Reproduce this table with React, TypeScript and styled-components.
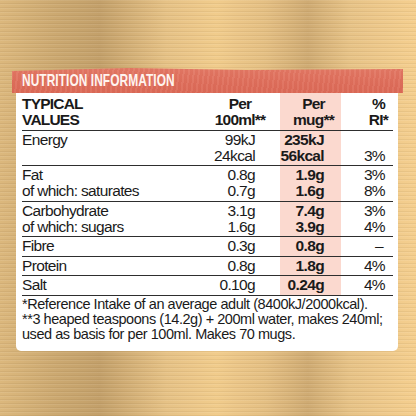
import React from 'react';
import styled, { createGlobalStyle } from 'styled-components';

const GlobalStyle = createGlobalStyle`
  html, body {
    margin: 0;
    padding: 0;
  }

  body {
    font-family: "Liberation Sans", Arial, sans-serif;
    color: #1a1a1a;
  }
`;

const Page = styled.div`
  width: 416px;
  height: 416px;
  box-sizing: border-box;
  padding: 68px 18px 0 16px;
  overflow: hidden;
  background:
    repeating-linear-gradient(180deg, rgba(255, 255, 255, 0.08) 0 1px, rgba(0, 0, 0, 0) 1px 3px, rgba(90, 60, 20, 0.07) 3px 4px),
    linear-gradient(90deg, #dcb87d 0%, #cba870 14%, #c3a06a 24%, #e6c286 40%, #f1cc8c 52%, #e4bf83 64%, #cfab73 74%, #e7c387 84%, #f5cf8f 100%);
`;

const Card = styled.div`
  display: flex;
  flex-direction: column;
`;

const Banner = styled.div`
  height: 25px;
  margin: 0 -5px 0 -4px;
  padding-left: 10px;
  display: flex;
  align-items: center;
  background:
    repeating-linear-gradient(97deg, rgba(255, 255, 255, 0.05) 0 2px, rgba(150, 40, 30, 0.05) 2px 5px),
    linear-gradient(180deg, #e47a66 0%, #df6f5c 60%, #dc6b58 100%);
  clip-path: polygon(0 3px, 30% 0, 60% 2px, 100% 1px, 100% 100%, 0 100%);
`;

const BannerText = styled.span`
  display: inline-block;
  color: #fff4ef;
  font-weight: 700;
  font-size: 17px;
  letter-spacing: 0.1px;
  white-space: nowrap;
  transform: scaleX(0.7);
  transform-origin: left center;
`;

const Panel = styled.div`
  background: #ffffff;
  border-radius: 0 0 5px 5px;
  padding: 0 5px 9px 6px;
`;

const Row = styled.div<{ $head?: boolean }>`
  display: grid;
  grid-template-columns: 190px 56px 12px 61px 52px;
  border-bottom: 1.5px solid #2e2e2e;
  font-size: 15.5px;
  line-height: 16px;
  letter-spacing: ${({ $head }) => ($head ? '-0.8px' : '-0.65px')};
  font-weight: ${({ $head }) => ($head ? 700 : 400)};
`;

type Align = 'left' | 'center' | 'right';

const Cell = styled.div<{ $align?: Align; $pad?: number; $bold?: boolean; $pink?: boolean; $head?: boolean }>`
  text-align: ${({ $align }) => $align || 'left'};
  padding: ${({ $head }) => ($head ? '3px 0 1.5px' : '1px 0 1.5px')};
  padding-right: ${({ $pad }) => $pad || 0}px;
  padding-left: ${({ $align, $pink }) => ($align === 'center' && $pink ? '6px' : '0')};
  font-weight: ${({ $bold }) => ($bold ? 700 : 'inherit')};
  background: ${({ $pink }) => ($pink ? '#fbd9cf' : 'transparent')};
  white-space: nowrap;
`;

const Stack = styled.span`
  display: inline-block;
  text-align: center;
`;

const Note = styled.p`
  margin: 0;
  padding-top: 1px;
  font-size: 14.5px;
  line-height: 15.2px;
  letter-spacing: -0.45px;
`;

interface INutrient {
  label: string[];
  per100: string[];
  mug: string[];
  ri: string[];
}

const nutrients: INutrient[] = [
  { label: ['Energy'], per100: ['99kJ', '24kcal'], mug: ['235kJ', '56kcal'], ri: ['', '3%'] },
  { label: ['Fat', 'of which: saturates'], per100: ['0.8g', '0.7g'], mug: ['1.9g', '1.6g'], ri: ['3%', '8%'] },
  { label: ['Carbohydrate', 'of which: sugars'], per100: ['3.1g', '1.6g'], mug: ['7.4g', '3.9g'], ri: ['3%', '4%'] },
  { label: ['Fibre'], per100: ['0.3g'], mug: ['0.8g'], ri: ['–'] },
  { label: ['Protein'], per100: ['0.8g'], mug: ['1.8g'], ri: ['4%'] },
  { label: ['Salt'], per100: ['0.10g'], mug: ['0.24g'], ri: ['4%'] },
];

function Lines({ items }: { items: string[] }) {
  return (
    <>
      {items.map((text, i) => (
        <React.Fragment key={i}>
          {i > 0 && <br />}
          {text || '\u00a0'}
        </React.Fragment>
      ))}
    </>
  );
}

function NutritionRow({ item }: { item: INutrient }) {
  return (
    <Row>
      <Cell><Lines items={item.label} /></Cell>
      <Cell $align="right" $pad={13}><Lines items={item.per100} /></Cell>
      <Cell />
      <Cell $align="right" $pad={17} $bold $pink><Lines items={item.mug} /></Cell>
      <Cell $align="right" $pad={item.ri[0] === '–' ? 10 : 8}><Lines items={item.ri} /></Cell>
    </Row>
  );
}

export default function App() {
  return (
    <Page>
      <GlobalStyle />
      <Card>
        <Banner>
          <BannerText>NUTRITION INFORMATION</BannerText>
        </Banner>
        <Panel>
          <Row $head>
            <Cell $head>TYPICAL<br />VALUES</Cell>
            <Cell $head $align="center">Per<br />100ml**</Cell>
            <Cell $head />
            <Cell $head $align="center" $pink>Per<br />mug**</Cell>
            <Cell $head $align="right" $pad={5}>
              <Stack>%<br />RI*</Stack>
            </Cell>
          </Row>
          {nutrients.map((item) => (
            <NutritionRow key={item.label[0]} item={item} />
          ))}
          <Note>
            *Reference Intake of an average adult (8400kJ/2000kcal).
            <br />
            **3 heaped teaspoons (14.2g) + 200ml water, makes 240ml;
            <br />
            used as basis for per 100ml. Makes 70 mugs.
          </Note>
        </Panel>
      </Card>
    </Page>
  );
}
